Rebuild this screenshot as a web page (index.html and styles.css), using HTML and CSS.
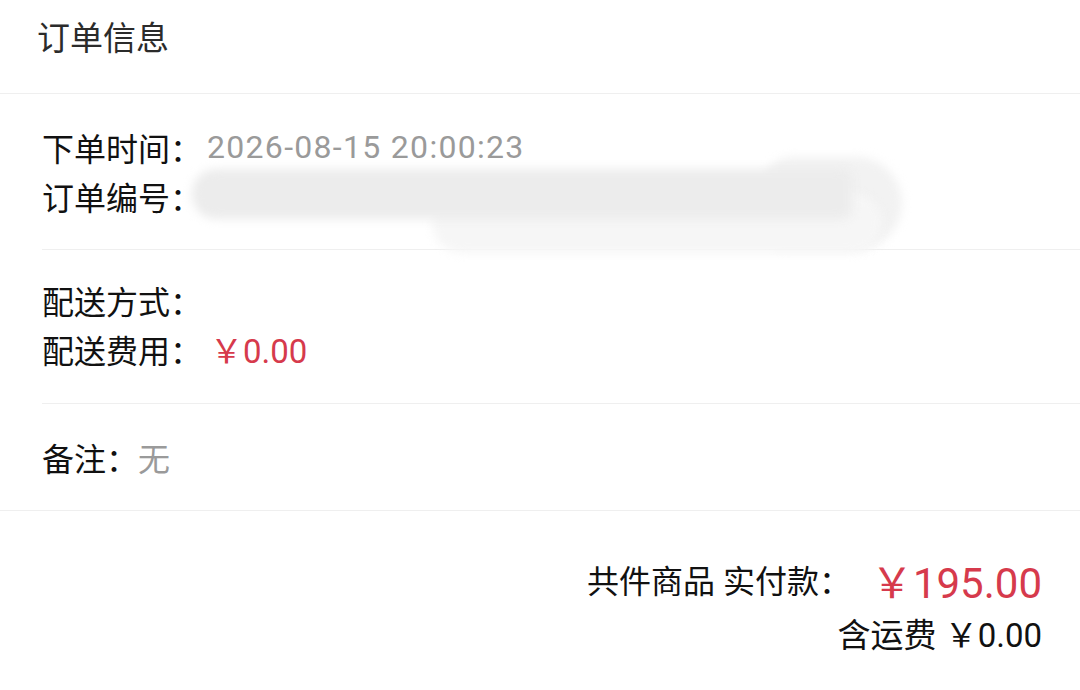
FILE: index.html
```html
<!DOCTYPE html>
<html>
<head>
    <meta charset="UTF-8">
    <meta name="viewport" content="width=device-width, initial-scale=1.0">
    <title>订单信息</title>
    <link rel="stylesheet" href="styles.css">
</head>
<body>
    <div class="order-card">
        <div class="card-title">订单信息</div>
        <div class="card-body">
            <div class="info-group">
                <div class="info-row">
                    <span class="label">下单时间：</span><span class="value date">2026-08-15 20:00:23</span>
                </div>
                <div class="info-row order-no">
                    <span class="label">订单编号：</span>
                    <span class="smudge smudge-right"></span>
                    <span class="smudge smudge-bottom"></span>
                    <span class="smudge smudge-top"></span>
                </div>
            </div>
            <div class="info-group delivery">
                <div class="info-row">
                    <span class="label">配送方式：</span>
                </div>
                <div class="info-row">
                    <span class="label">配送费用：</span><span class="price">￥0.00</span>
                </div>
            </div>
            <div class="info-group last">
                <div class="info-row">
                    <span class="label">备注：</span><span class="value">无</span>
                </div>
            </div>
        </div>
        <div class="summary">
            <div class="summary-total">
                <span class="summary-label">共件商品 实付款：</span>
                <span class="total-price">￥195.00</span>
            </div>
            <div class="summary-freight">含运费 ￥0.00</div>
        </div>
    </div>
</body>
</html>
```

FILE: styles.css
```css
body {
    margin: 0;
    padding: 0;
    background-color: #fff;
    font-family: Roboto, "Noto Sans CJK SC", sans-serif;
    color: #1a1a1a;
}
.order-card {
    width: 1080px;
    height: 690px;
    background-color: #fff;
    overflow: hidden;
}
.card-title {
    height: 94px;
    padding: 0 0 21px 37px;
    display: flex;
    align-items: center;
    font-size: 33px;
    color: #2b2b2b;
    border-bottom: 1px solid #efefef;
    box-sizing: border-box;
}
.card-body {
    border-bottom: 1px solid #efefef;
}
.info-group {
    margin-left: 42px;
    padding: 28px 0 29px 0;
    border-bottom: 1px solid #efefef;
}
.info-group.delivery {
    padding: 25px 0 30px 0;
}
.info-group.last {
    border-bottom: none;
}
.info-row {
    height: 49px;
    display: flex;
    align-items: center;
    font-size: 32px;
}
.label {
    color: #111;
}
.value {
    color: #9a9a9a;
}
.date {
    letter-spacing: 1.3px;
    margin-left: 5px;
}
.price {
    color: #d63a4c;
    margin-left: 8px;
    font-size: 33px;
}
.order-no {
    position: relative;
}
.smudge {
    position: absolute;
    filter: blur(5px);
}
.smudge-top {
    left: 150px;
    top: -2px;
    width: 660px;
    height: 50px;
    border-radius: 24px 10px 10px 24px;
    background-color: #ececec;
}
.smudge-right {
    left: 720px;
    top: -14px;
    width: 140px;
    height: 92px;
    border-radius: 40px 60px 60px 30px;
    background-color: #f2f2f2;
}
.smudge-bottom {
    left: 390px;
    top: 22px;
    width: 450px;
    height: 60px;
    border-radius: 30px;
    background-color: #f6f6f6;
}
.summary {
    display: flex;
    flex-direction: column;
    align-items: flex-end;
    padding: 44px 38px 0 0;
}
.summary-total {
    height: 48px;
    display: flex;
    align-items: center;
}
.summary-label {
    font-size: 32px;
    color: #111;
    margin-right: 20px;
}
.total-price {
    font-size: 42px;
    color: #d63a4c;
}
.summary-freight {
    margin-top: 6px;
    height: 48px;
    display: flex;
    align-items: center;
    font-size: 33px;
    color: #111;
}
```
